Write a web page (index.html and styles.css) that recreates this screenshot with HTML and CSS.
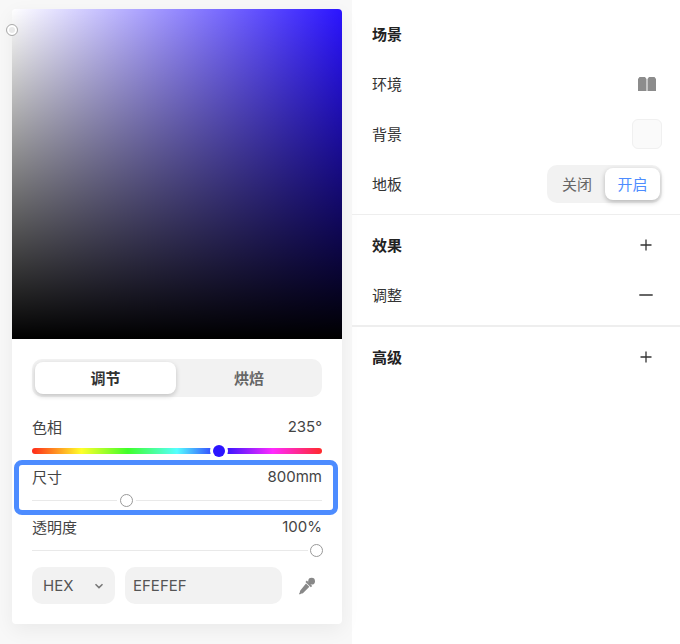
FILE: index.html
```html
<!DOCTYPE html>
<html lang="zh">
<head>
<meta charset="utf-8">
<title>材质</title>
<link rel="stylesheet" href="styles.css">
</head>
<body>
<div class="left">
  <div class="card">
    <div class="picker"><span class="picker-thumb"></span></div>
    <div class="controls">
      <div class="tabs">
        <div class="tab tab-active">调节</div>
        <div class="tab tab-rest">烘焙</div>
      </div>
      <div class="slider-group">
        <div class="slider">
          <div class="slider-head"><span class="cjk">色相</span><span>235°</span></div>
          <div class="track track-hue"><span class="thumb thumb-hue"></span></div>
        </div>
        <div class="slider slider-marked">
          <div class="slider-head"><span class="cjk">尺寸</span><span>800mm</span></div>
          <div class="track"><span class="thumb thumb-size"></span></div>
        </div>
        <div class="slider">
          <div class="slider-head"><span class="cjk">透明度</span><span>100%</span></div>
          <div class="track"><span class="thumb thumb-opacity"></span></div>
        </div>
      </div>
      <div class="inputs">
        <div class="field field-mode">
          <span>HEX</span>
          <svg class="chevron" width="10" height="6" viewBox="0 0 10 6"><path d="M1.500 1.200 5 4.600l3.500-3.400" fill="none" stroke="#777" stroke-width="1.500"/></svg>
        </div>
        <div class="field field-value">EFEFEF</div>
        <svg class="dropper" width="18" height="18" viewBox="0 0 18 18">
          <circle cx="13.600" cy="4.200" r="3.400" fill="#888"/>
          <path d="M8.800 3.600l5.400 5.400-1.300 1.300-5.400-5.400z" fill="#888"/>
          <path d="M8 6.400l3.400 3.400-6 6c-.7.700-1.700.7-2.400.9l-1.300.8-.7-.7.800-1.300c.2-.7.200-1.700.9-2.400z" fill="#888"/>
        </svg>
      </div>
    </div>
  </div>
</div>
<div class="panel">
  <section class="group">
    <div class="row row-title"><span class="label">场景</span></div>
    <div class="row"><span class="label">环境</span>
      <svg class="book" width="18" height="14" viewBox="0 0 18 14"><path d="M0 2 1.500 0H7l1.500 2v12H0zM9.500 2 11 0h5.500L18 2v12H9.500z" fill="#8c8c8c"/></svg>
    </div>
    <div class="row"><span class="label">背景</span><span class="swatch"></span></div>
    <div class="row"><span class="label">地板</span>
      <div class="toggle"><span class="toggle-item toggle-off">关闭</span><span class="toggle-item toggle-on">开启</span></div>
    </div>
  </section>
  <section class="group group-second">
    <div class="row row-title"><span class="label">效果</span><svg class="sign" width="14" height="14" viewBox="0 0 14 14"><path d="M7 1.500v11M1.500 7h11" stroke="#333" stroke-width="1.300"/></svg></div>
    <div class="row"><span class="label">调整</span><svg class="sign" width="14" height="14" viewBox="0 0 14 14"><path d="M.3 7h13.400" stroke="#555" stroke-width="1.800"/></svg></div>
  </section>
  <section class="group group-third">
    <div class="row row-title"><span class="label">高级</span><svg class="sign" width="14" height="14" viewBox="0 0 14 14"><path d="M7 1.500v11M1.500 7h11" stroke="#333" stroke-width="1.300"/></svg></div>
  </section>
</div>
</body>
</html>
```
FILE: styles.css
```css
*, *::before, *::after { box-sizing: border-box; }
html, body { margin: 0; height: 644px; overflow: hidden; }
body {
  display: flex;
  width: 680px;
  background: #fff;
  font-family: Inter, "Noto Sans CJK SC", sans-serif;
  font-size: 15px;
  line-height: 20px;
  color: #333;
}
.left {
  width: 352px;
  height: 644px;
  flex: none;
  padding: 9px 10px 0 12px;
  background: #f8f8f8;
}
.card {
  width: 330px;
  height: 615px;
  background: #fff;
  border-radius: 4px;
  box-shadow: 0 6px 20px rgba(0, 0, 0, .06);
}
.picker {
  position: relative;
  height: 330px;
  border-radius: 4px 4px 0 0;
  background:
    linear-gradient(to bottom, rgba(0, 0, 0, 0), #000),
    linear-gradient(to right, #fff, #2b14ff);
}
.picker-thumb {
  position: absolute;
  left: -6px;
  top: 15px;
  width: 12px;
  height: 12px;
  border-radius: 50%;
  border: 1px solid #aaa;
  background: #e9e9e9;
  box-shadow: inset 0 0 0 2px #fff;
}
.controls { padding: 20px 20px 0; }
.tabs {
  display: flex;
  height: 38px;
  padding: 3px;
  border-radius: 10px;
  background: #f2f2f2;
}
.tab {
  display: flex;
  align-items: center;
  justify-content: center;
  padding-top: 2px;
  border-radius: 8px;
  font-weight: 700;
  color: #666;
}
.tab-active {
  flex: none;
  width: 141px;
  background: #fff;
  color: #333;
  box-shadow: 0 2px 5px rgba(0, 0, 0, .2);
}
.tab-rest { flex: 1; padding-left: 3px; }
.slider-group { margin-top: 20px; }
.slider { position: relative; height: 50px; }
.slider-marked::after {
  content: "";
  position: absolute;
  left: -18px;
  right: -16px;
  top: -7px;
  height: 55px;
  border: 5px solid #4d8cff;
  border-radius: 8px;
}
.slider-head {
  display: flex;
  justify-content: space-between;
  height: 20px;
  color: #444;
}
.cjk { margin-top: 1px; }
.track {
  position: relative;
  height: 1px;
  margin-top: 13px;
  background: #e9e9e9;
}
.track-hue {
  height: 6px;
  margin-top: 11px;
  border-radius: 3px;
  background: linear-gradient(to right, #ff2a1a 0%, #ffff2a 17%, #3fff2a 33%, #55ffff 50%, #2b14ff 66%, #ff2aff 83%, #ff2a2a 100%);
}
.thumb {
  position: absolute;
  top: -6px;
  width: 13px;
  height: 13px;
  border-radius: 50%;
  border: 1px solid #999;
  background: #fff;
  box-shadow: 0 0 0 3px #fff;
}
.thumb-hue {
  top: -3px;
  left: 181px;
  width: 12px;
  height: 12px;
  border: 0;
  background: #2b14ff;
}
.thumb-size { left: 88px; }
.thumb-opacity { left: 278px; box-shadow: 0 0 0 2px #fff; }
.inputs {
  display: flex;
  align-items: center;
  gap: 10px;
  height: 37px;
}
.field {
  display: flex;
  align-items: center;
  height: 37px;
  border-radius: 10px;
  background: #f2f2f2;
  color: #555;
}
.field-mode {
  width: 83px;
  justify-content: space-between;
  padding: 0 11px;
}
.field-value { width: 157px; padding-left: 8px; }
.dropper { margin-left: 6px; }
.panel { flex: 1; }
.group { padding: 9px 0 5px; border-bottom: 1px solid #eee; }
.group-second { padding: 5px 0; border-bottom-width: 2px; }
.group-third { padding: 5px 0; border-bottom: 0; }
.row {
  display: flex;
  align-items: center;
  justify-content: space-between;
  height: 50px;
  padding: 0 18px 0 20px;
  color: #333;
}
.label { padding-top: 2px; }
.row-title { font-weight: 700; color: #222; }
.book { margin-right: 6px; }
.sign { margin-right: 9px; }
.swatch {
  width: 30px;
  height: 30px;
  border: 1px solid #f0f0f0;
  border-radius: 6px;
  background: #fafafa;
}
.toggle {
  display: flex;
  width: 115px;
  height: 38px;
  padding: 3px 2px 3px 0;
  border-radius: 10px;
  background: #f2f2f2;
}
.toggle-item {
  display: flex;
  align-items: center;
  justify-content: center;
  padding-top: 2px;
  color: #666;
}
.toggle-off { flex: 1; padding-left: 2px; }
.toggle-on {
  flex: none;
  width: 55px;
  border-radius: 8px;
  background: #fff;
  color: #4d8cff;
  box-shadow: 0 2px 5px rgba(0, 0, 0, .25);
}
```
